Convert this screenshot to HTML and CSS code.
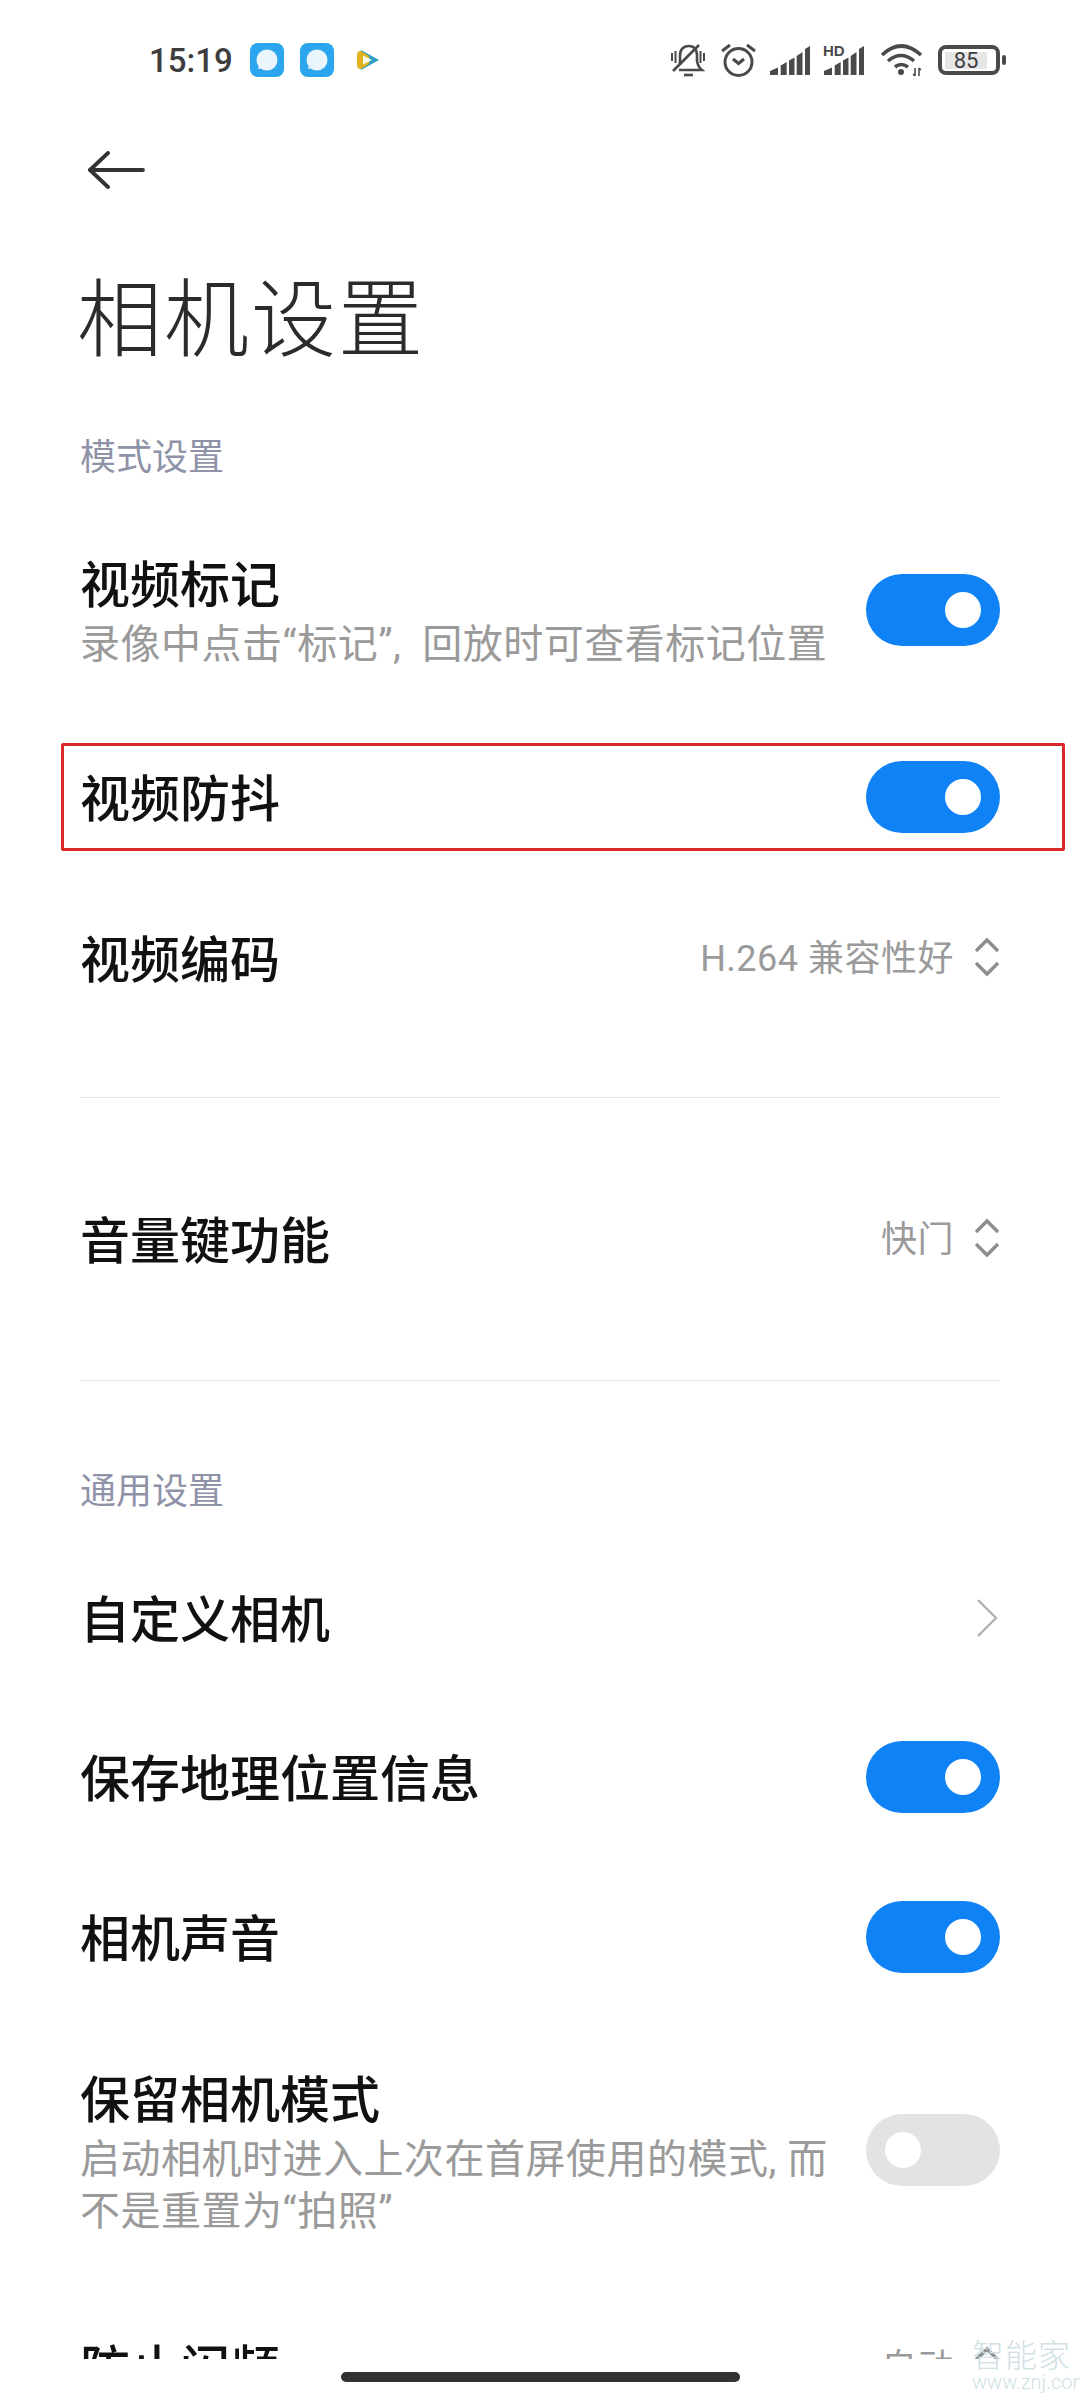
FILE: index.html
```html
<!DOCTYPE html>
<html lang="zh-CN">
<head>
    <meta charset="UTF-8">
    <meta name="viewport" content="width=device-width, initial-scale=1.0">
    <title>相机设置</title>
    <link rel="stylesheet" href="styles.css">
</head>
<body>
    <div class="phone">
        <div class="status-bar">
            <div class="status-left">
                <span class="clock">15:19</span>
                <svg class="app-icon" viewBox="0 0 34 34">
                    <rect width="34" height="34" rx="8" fill="#2ba6ee"/>
                    <circle cx="17" cy="17" r="10.5" fill="#e9f5fb"/>
                    <path d="M8 26l2-6 4 5z" fill="#e9f5fb"/>
                </svg>
                <svg class="app-icon" viewBox="0 0 34 34">
                    <rect width="34" height="34" rx="8" fill="#2ba6ee"/>
                    <circle cx="17" cy="17" r="10.5" fill="#e9f5fb"/>
                    <path d="M8 26l2-6 4 5z" fill="#e9f5fb"/>
                </svg>
                <svg class="video-icon" viewBox="0 0 24 22">
                    <path d="M5 1l18 10-18 10z" fill="#2f9fc4"/>
                    <path d="M1 5q0-3 4-3l8 5v8l-8 5q-4 0-4-3z" fill="#e3b21f"/>
                    <path d="M7 6.5l9 4.5-9 4.5z" fill="#f4f7e6"/>
                </svg>
            </div>
            <div class="status-right">
                <svg class="bell" viewBox="0 0 34 34" fill="none" stroke="#4a4a4a" stroke-width="2.6">
                    <path d="M9 22V13Q9 3 18 3Q25 3 26 11V18Q27 24 31 27H8"/>
                    <path d="M13 32H22"/>
                    <path d="M2 28L28 2"/>
                    <path d="M1 10V18M4.5 8V20M29.5 8V20M33 10V18" stroke-width="2"/>
                </svg>
                <svg class="alarm" viewBox="0 0 36 34" fill="none" stroke="#4a4a4a" stroke-width="3">
                    <circle cx="17.5" cy="19" r="13.5"/>
                    <path d="M12 16l5.5 4.5 5.5-4.5"/>
                    <path d="M1 8l8-6M34 8l-8-6"/>
                </svg>
                <svg class="st-signal" viewBox="0 0 40 29" fill="#4a4a4a">
                    <path d="M0 29V25L8 21.5V29ZM10.7 29V19.5L16.7 16V29ZM19 29V14.5L24.5 11.5V29ZM26.7 29V10L32.5 6V29ZM35 29V3L40 0V29Z"/>
                </svg>
                <div class="hd-signal">
                    <span class="hd-label">HD</span>
                    <svg class="st-signal" viewBox="0 0 40 29" fill="#4a4a4a">
                        <path d="M0 29V25L8 21.5V29ZM10.7 29V19.5L16.7 16V29ZM19 29V14.5L24.5 11.5V29ZM26.7 29V10L32.5 6V29ZM35 29V3L40 0V29Z"/>
                    </svg>
                </div>
                <svg class="st-wifi" viewBox="0 0 44 34" fill="none" stroke="#4a4a4a" stroke-width="3.6">
                    <path d="M2 12Q21 -6 41 12"/>
                    <path d="M8 18Q21 7 34 18"/>
                    <path d="M15 24Q21 19 28 24"/>
                    <circle cx="21" cy="29" r="3" fill="#4a4a4a" stroke="none"/>
                    <path d="M35 25v8M33 31l2 2M39 33v-8M41 27l-2-2" stroke-width="1.6"/>
                </svg>
                <div class="battery">
                    <div class="battery-body"><span>85</span></div>
                    <div class="battery-tip"></div>
                </div>
            </div>
        </div>

        <div class="content">
            <div class="nav">
                <svg class="back-arrow" viewBox="0 0 58 38" fill="none" stroke="#333" stroke-width="3.8" stroke-linecap="round" stroke-linejoin="round">
                    <path d="M56 19H3"/>
                    <path d="M21 2L3 19l18 17"/>
                </svg>
            </div>
            <h1 class="page-title">相机设置</h1>

            <div class="section-label">模式设置</div>

            <div class="row row-double">
                <div class="row-text">
                    <div class="row-title">视频标记</div>
                    <div class="row-sub">录像中点击“标记”, &nbsp;回放时可查看标记位置</div>
                </div>
                <div class="switch on"><div class="thumb"></div></div>
            </div>

            <div class="row row-marked">
                <div class="row-text"><div class="row-title">视频防抖</div></div>
                <div class="switch on"><div class="thumb"></div></div>
                <div class="red-box"></div>
            </div>

            <div class="row row-code">
                <div class="row-text"><div class="row-title">视频编码</div></div>
                <span class="row-value">H.264 兼容性好</span>
                <svg class="updown" viewBox="0 0 26 40" fill="none" stroke="#8e8e8e" stroke-width="3.4"><path d="M2 14L13 3l11 11M2 26l11 11 11-11"/></svg>
            </div>

            <div class="divider"></div>

            <div class="row row-volume">
                <div class="row-text"><div class="row-title">音量键功能</div></div>
                <span class="row-value">快门</span>
                <svg class="updown" viewBox="0 0 26 40" fill="none" stroke="#8e8e8e" stroke-width="3.4"><path d="M2 14L13 3l11 11M2 26l11 11 11-11"/></svg>
            </div>

            <div class="divider"></div>

            <div class="section-label section-general">通用设置</div>

            <div class="row row-custom">
                <div class="row-text"><div class="row-title">自定义相机</div></div>
                <svg class="chevron" viewBox="0 0 22 40" fill="none" stroke="#b0b0b0" stroke-width="2.4"><path d="M2 2l18 18L2 38"/></svg>
            </div>

            <div class="row">
                <div class="row-text"><div class="row-title">保存地理位置信息</div></div>
                <div class="switch on"><div class="thumb"></div></div>
            </div>

            <div class="row">
                <div class="row-text"><div class="row-title">相机声音</div></div>
                <div class="switch on"><div class="thumb"></div></div>
            </div>

            <div class="row row-triple">
                <div class="row-text">
                    <div class="row-title">保留相机模式</div>
                    <div class="row-sub">启动相机时进入上次在首屏使用的模式, 而<br>不是重置为“拍照”</div>
                </div>
                <div class="switch"><div class="thumb"></div></div>
            </div>

            <div class="row row-cut">
                <div class="row-text"><div class="row-title">防止闪频</div></div>
                <span class="row-value">自动</span>
                <svg class="updown" viewBox="0 0 26 40" fill="none" stroke="#8e8e8e" stroke-width="3.4"><path d="M2 14L13 3l11 11M2 26l11 11 11-11"/></svg>
            </div>
        </div>

        <div class="gesture-area"><div class="gesture-pill"></div></div>

        <div class="watermark">
            <div class="wm-name">智能家</div>
            <div class="wm-url">www.znj.com</div>
        </div>
    </div>
</body>
</html>
```
FILE: styles.css
```css
* {
    box-sizing: border-box;
}
body {
    margin: 0;
    background-color: #fff;
    font-family: "Roboto", "Noto Sans CJK SC", sans-serif;
}
.phone {
    position: relative;
    width: 1080px;
    height: 2400px;
    display: flex;
    flex-direction: column;
    overflow: hidden;
    background-color: #fff;
}

/* status bar */
.status-bar {
    height: 120px;
    flex-shrink: 0;
    display: flex;
    justify-content: space-between;
    align-items: center;
    padding: 0 74px 0 149px;
}
.status-left {
    display: flex;
    align-items: center;
}
.clock {
    width: 101px;
    font-size: 33px;
    font-weight: 500;
    color: #3d3d3d;
}
.app-icon {
    width: 34px;
    height: 34px;
    margin-right: 16px;
}
.video-icon {
    width: 24px;
    height: 22px;
    margin-left: 6px;
}
.status-right {
    display: flex;
    align-items: center;
}
.bell {
    width: 34px;
    height: 34px;
    margin-right: 16px;
}
.alarm {
    width: 36px;
    height: 34px;
    margin-right: 13px;
}
.st-signal {
    width: 40px;
    height: 29px;
    display: block;
}
.status-right > .st-signal {
    margin-right: 14px;
}
.hd-signal {
    position: relative;
    margin-right: 16px;
}
.hd-label {
    position: absolute;
    left: -1px;
    top: -3px;
    font-family: "Liberation Sans", sans-serif;
    font-size: 15px;
    line-height: 15px;
    font-weight: 700;
    color: #4a4a4a;
}
.st-wifi {
    width: 44px;
    height: 34px;
    margin-right: 14px;
}
.battery {
    display: flex;
    align-items: center;
}
.battery-body {
    width: 62px;
    height: 30px;
    border: 4px solid #4a4a4a;
    border-radius: 8px;
    display: flex;
    align-items: center;
    padding-left: 3px;
}
.battery-body span {
    width: 42px;
    background-color: #e6e6e6;
    text-align: center;
    font-size: 22px;
    line-height: 17px;
    color: #3d3d3d;
}
.battery-tip {
    width: 4px;
    height: 10px;
    margin-left: 2px;
    background-color: #4a4a4a;
    border-radius: 2px;
}

/* page */
.content {
    height: 2239px;
    flex-shrink: 0;
    overflow: hidden;
    padding: 0 80px;
}
.nav {
    height: 100px;
    display: flex;
    align-items: center;
}
.back-arrow {
    width: 58px;
    height: 38px;
    margin-left: 7px;
}
.page-title {
    height: 184px;
    margin: 0 0 12px -3px;
    display: flex;
    align-items: center;
    font-size: 85px;
    font-weight: 300;
    color: #2b2b2b;
    letter-spacing: 2px;
}
.section-label {
    height: 78px;
    padding-bottom: 3px;
    display: flex;
    align-items: center;
    font-size: 36px;
    font-weight: 400;
    color: #8f93a8;
}
.section-general {
    margin-top: 69px;
}
.row {
    position: relative;
    display: flex;
    align-items: center;
    height: 160px;
}
.row-text {
    flex: 1;
    min-width: 0;
}
.row-title {
    font-size: 50px;
    font-weight: 500;
    color: #111;
    line-height: 60px;
    padding-top: 3px;
    margin-bottom: -3px;
}
.row-sub {
    font-size: 40px;
    letter-spacing: 0.5px;
    color: #9a9a9a;
    line-height: 52px;
    margin-top: 6px;
    white-space: nowrap;
}
.row-double {
    height: 232px;
}
.row-double .row-text {
    margin-top: 4px;
}
.row-marked {
    height: 142px;
}
.row-code {
    height: 180px;
    margin-bottom: 49px;
}
.row-volume {
    height: 282px;
}
.row-custom {
    height: 158px;
    margin-top: 11px;
}
.row-triple {
    height: 266px;
}
.row-triple .row-text {
    margin-top: 5px;
}
.row-cut {
    height: 168px;
}
.row-value {
    font-size: 36px;
    letter-spacing: 0.5px;
    color: #9a9a9a;
    margin: 0 20px 6px 0;
}
.updown {
    width: 26px;
    height: 40px;
    margin-bottom: 3px;
}
.chevron {
    width: 22px;
    height: 40px;
    margin-right: 2px;
}
.switch {
    width: 134px;
    height: 72px;
    flex-shrink: 0;
    border-radius: 36px;
    background-color: #e3e3e3;
    display: flex;
    align-items: center;
    padding: 0 19px;
}
.switch.on {
    background-color: #0f82f5;
    justify-content: flex-end;
}
.thumb {
    width: 36px;
    height: 36px;
    border-radius: 50%;
    background-color: #fff;
}
.divider {
    height: 1px;
    background-color: #e3e3e3;
}
.red-box {
    position: absolute;
    left: -19px;
    right: -65px;
    top: 17px;
    height: 108px;
    border: 3px solid #d9272a;
    border-radius: 2px;
}

/* bottom */
.gesture-area {
    flex: 1;
    display: flex;
    justify-content: center;
    padding-top: 13px;
    background-color: #fff;
}
.gesture-pill {
    width: 399px;
    height: 10px;
    border-radius: 5px;
    background-color: #333;
}
.watermark {
    position: absolute;
    right: 10px;
    bottom: 6px;
    width: 98px;
    text-align: center;
    color: #cfe1e5;
}
.wm-name {
    font-size: 32px;
    font-weight: 300;
    line-height: 34px;
    letter-spacing: 1px;
    white-space: nowrap;
    margin-bottom: -3px;
}
.wm-url {
    font-size: 20px;
    font-weight: 300;
    line-height: 24px;
    white-space: nowrap;
}
```
